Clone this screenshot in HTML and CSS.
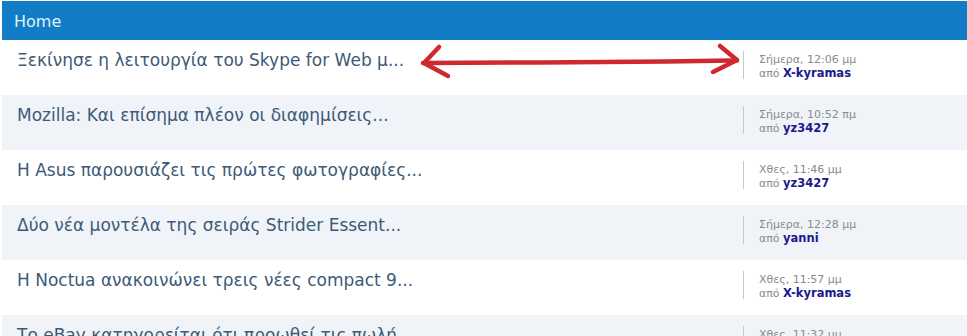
FILE: index.html
```html
<!DOCTYPE html>
<html lang="el">
<head>
<meta charset="utf-8">
<title>Home</title>
<link rel="stylesheet" href="styles.css">
</head>
<body>
<div class="block">
  <div class="head">Home</div>
  <ul class="list">
    <li class="row">
      <a class="title" href="#">Ξεκίνησε η λειτουργία του Skype for Web μ...</a>
      <div class="meta"><span class="date">Σήμερα, 12:06 μμ</span><span class="by">από <b>X-kyramas</b></span></div>
    </li>
    <li class="row alt">
      <a class="title" href="#">Mozilla: Και επίσημα πλέον οι διαφημίσεις...</a>
      <div class="meta"><span class="date">Σήμερα, 10:52 πμ</span><span class="by">από <b>yz3427</b></span></div>
    </li>
    <li class="row">
      <a class="title" href="#">Η Asus παρουσιάζει τις πρώτες φωτογραφίες...</a>
      <div class="meta"><span class="date">Χθες, 11:46 μμ</span><span class="by">από <b>yz3427</b></span></div>
    </li>
    <li class="row alt">
      <a class="title" href="#">Δύο νέα μοντέλα της σειράς Strider Essent...</a>
      <div class="meta"><span class="date">Σήμερα, 12:28 μμ</span><span class="by">από <b>yanni</b></span></div>
    </li>
    <li class="row">
      <a class="title" href="#">Η Noctua ανακοινώνει τρεις νέες compact 9...</a>
      <div class="meta"><span class="date">Χθες, 11:57 μμ</span><span class="by">από <b>X-kyramas</b></span></div>
    </li>
    <li class="row alt">
      <a class="title" href="#">Το eBay κατηγορείται ότι προωθεί τις πωλή...</a>
      <div class="meta"><span class="date">Χθες, 11:32 μμ</span><span class="by">από <b>X-kyramas</b></span></div>
    </li>
  </ul>
  <svg class="arrow" width="340" height="40" viewBox="0 0 340 40" aria-hidden="true">
    <path d="M7 22 C 80 21.5, 180 21.5, 250 20.5 S 310 19.5, 321 19.5" fill="none" stroke="#d0282f" stroke-width="4.5" stroke-linecap="round"/>
    <path d="M23 6 L 8 22 L 32 35" fill="none" stroke="#d0282f" stroke-width="4.5" stroke-linecap="round" stroke-linejoin="round"/>
    <path d="M304 5 L 321 19 L 297 31" fill="none" stroke="#d0282f" stroke-width="4.5" stroke-linecap="round" stroke-linejoin="round"/>
  </svg>
</div>
</body>
</html>
```
FILE: styles.css
```css
html, body {
  margin: 0;
  padding: 0;
  background: #ffffff;
}
body {
  font-family: "DejaVu Sans", Verdana, sans-serif;
  overflow: hidden;
}
.block {
  position: relative;
  padding: 1px 0 0 2px;
}
.head {
  height: 39px;
  box-sizing: border-box;
  padding: 11px 0 0 12px;
  background: #137cc6;
  color: #dff3ff;
  font-size: 16px;
  line-height: 20px;
}
.list {
  list-style: none;
  margin: 0;
  padding: 0;
}
.row {
  display: grid;
  grid-template-columns: 741px 1fr;
  height: 55px;
  box-sizing: border-box;
  padding-top: 9px;
  background: #ffffff;
}
.row.alt {
  background: #f0f4f8;
}
.title {
  padding-left: 15px;
  color: #3d5a78;
  text-decoration: none;
  font-size: 17px;
  line-height: 22px;
  white-space: nowrap;
}
.meta {
  display: flex;
  flex-direction: column;
  align-self: start;
  margin-top: 2px;
  padding: 3px 0 0 15px;
  height: 28px;
  box-sizing: border-box;
  border-left: 1px solid #c8c8c8;
  font-size: 11px;
  line-height: 12.5px;
}
.date {
  color: #8a8a8a;
}
.by {
  color: #8a8a8a;
}
.by b {
  color: #1a1a8c;
  font-size: 11.5px;
}
.arrow {
  position: absolute;
  left: 416px;
  top: 41px;
}
```
